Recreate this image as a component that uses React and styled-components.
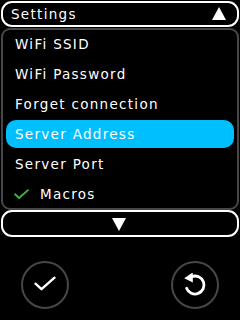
import React from 'react';
import styled, { createGlobalStyle } from 'styled-components';

const GlobalStyle = createGlobalStyle`
  html, body {
    margin: 0;
    padding: 0;
    background: #000;
  }
  body {
    font-family: "DejaVu Sans", "Liberation Sans", sans-serif;
    color: #fff;
  }
`;

const Screen = styled.div`
  width: 240px;
  height: 320px;
  box-sizing: border-box;
  padding: 1px;
  display: flex;
  flex-direction: column;
  background: #000;
  overflow: hidden;
`;

const Bar = styled.div`
  box-sizing: border-box;
  height: ${p => p.$h}px;
  border: 2px solid #fff;
  border-radius: 11px;
  display: flex;
  align-items: center;
  justify-content: ${p => (p.$center ? 'center' : 'space-between')};
  padding: 0 11px 0 8px;
`;

const Title = styled.span`
  font-size: 13.5px;
  letter-spacing: 1.3px;
  line-height: 1;
  padding-top: 1px;
`;

const List = styled.div`
  box-sizing: border-box;
  margin-top: 1px;
  height: 182px;
  border: 2px solid #474747;
  border-radius: 9px;
  padding: 0 3px;
  display: flex;
  flex-direction: column;
  gap: 2px;
  overflow: hidden;
`;

const Row = styled.div`
  flex: 0 0 28px;
  box-sizing: border-box;
  display: flex;
  align-items: center;
  gap: 11px;
  padding: 2px 0 0 9px;
  border-radius: 10px;
  background: ${p => (p.$active ? '#00bfff' : 'transparent')};
  font-size: 13.5px;
  letter-spacing: 1.3px;
  line-height: 1;
`;

const Footer = styled.div`
  display: flex;
  justify-content: space-between;
  padding: 24px 20px 0;
`;

const RoundButton = styled.div`
  box-sizing: border-box;
  width: 48px;
  height: 48px;
  border: 2px solid #474747;
  border-radius: 50%;
  display: flex;
  align-items: center;
  justify-content: center;
`;

const Triangle = ({ down }) => (
  <svg width="14" height="14" viewBox="0 0 14 14">
    <polygon points={down ? '0,1 14,1 7,14' : '7,0 14,13 0,13'} fill="#fff" />
  </svg>
);

const Tick = ({ color, size, w }) => (
  <svg width={size} height={size * 0.7} viewBox="0 0 22 15" style={{ marginLeft: -1, marginTop: -2 }}>
    <polyline points="1.5,7.5 7.5,13 20.5,1.5" fill="none" stroke={color} strokeWidth={w}
      strokeLinecap="round" strokeLinejoin="round" />
  </svg>
);

const UndoIcon = () => (
  <svg width="24" height="24" viewBox="0 0 24 24">
    <path d="M3.6 15.2 A9 9 0 1 0 8.8 3.6" fill="none" stroke="#fff" strokeWidth="2.8" strokeLinecap="round" />
    <polygon points="1.2,5.2 9.8,-0.6 9.8,9.6" fill="#fff" />
  </svg>
);

const items = ['WiFi SSID', 'WiFi Password', 'Forget connection', 'Server Address', 'Server Port'];

export default function App() {
  return (
    <Screen>
      <GlobalStyle />
      <Bar $h={26}>
        <Title>Settings</Title>
        <Triangle />
      </Bar>
      <List>
        {items.map(t => (
          <Row key={t} $active={t === 'Server Address'}>{t}</Row>
        ))}
        <Row>
          <Tick color="#3fb84a" size={15} w={2.6} />
          Macros
        </Row>
      </List>
      <Bar $h={27} $center>
        <Triangle down />
      </Bar>
      <Footer>
        <RoundButton>
          <Tick color="#fff" size={22} w={2.4} />
        </RoundButton>
        <RoundButton>
          <UndoIcon />
        </RoundButton>
      </Footer>
    </Screen>
  );
}
